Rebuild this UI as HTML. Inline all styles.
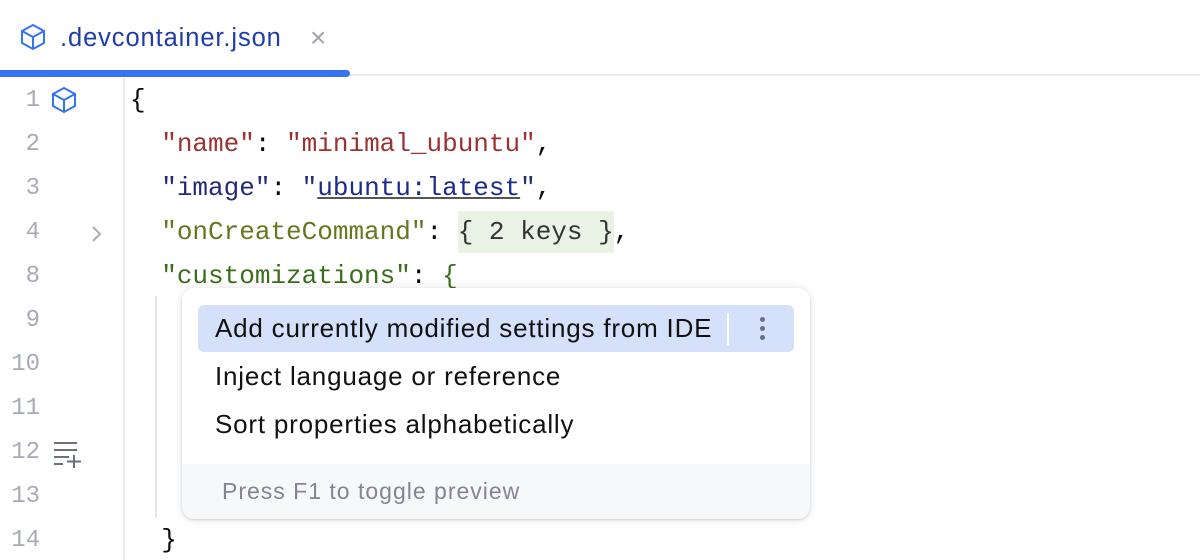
<!DOCTYPE html>
<html><head><meta charset="utf-8"><style>
*{margin:0;padding:0;box-sizing:border-box}
body{width:1200px;height:560px;background:#fff;position:relative;overflow:hidden;font-family:"Liberation Sans",sans-serif}
.tab{position:absolute;left:0;top:0;height:76px;width:1200px;border-bottom:2px solid #ebecf0}
.tabline{position:absolute;left:0;top:70px;width:350px;height:7px;background:#3574f0;border-radius:0 4px 4px 0}
.tabtxt{position:absolute;left:60px;top:24px;font-size:25.5px;letter-spacing:0.9px;color:#1f3da8}
.x{position:absolute;left:310px;top:22px;font-size:28px;color:#a0a3ab}
.gut{position:absolute;left:123px;top:78px;width:2px;height:482px;background:#ebecf0}
.ln{position:absolute;left:0;width:40px;text-align:right;font-family:"Liberation Mono",monospace;font-size:24px;color:#a8abb6}
.code{position:absolute;left:130px;font-family:"Liberation Mono",monospace;font-size:26px;color:#080808;white-space:pre}
.r{color:#9b3232}.n{color:#242b75}.b{color:#1d2c8a;text-decoration:underline;text-decoration-color:#555}.o{color:#6a761f}.g{color:#3b6e1a}
.fold{background:#e8f3e6;color:#333;padding:6px 0}
.pop{position:absolute;left:182px;top:288px;width:628px;height:231px;background:#fff;border-radius:12px;box-shadow:0 0 10px rgba(0,0,0,.1),0 1px 2px rgba(0,0,0,.15);overflow:hidden}
.hl{position:absolute;left:16px;top:17px;width:596px;height:47px;background:#d5e0fa;border-radius:6px}
.it{position:absolute;left:33px;font-size:26px;letter-spacing:0.8px;color:#111}
.foot{position:absolute;left:0;top:176px;width:628px;height:55px;background:#f7f8fa}
.foot span{position:absolute;left:40px;top:14px;font-size:23px;letter-spacing:1px;color:#818594}
</style></head><body>
<div class="tab">
<svg style="position:absolute;left:19px;top:23px" width="28" height="28" viewBox="0 0 28 28" fill="none" stroke="#3574f0" stroke-width="2"><path d="M14 2 L25 8 V20 L14 26 L3 20 V8 Z M3 8 L14 14 L25 8 M14 14 V26"/></svg>
<div class="tabtxt">.devcontainer.json</div>
<div class="x">×</div>
</div>
<div class="tabline"></div>
<div class="gut"></div>
<svg style="position:absolute;left:50px;top:86px" width="28" height="28" viewBox="0 0 28 28" fill="none" stroke="#3574f0" stroke-width="2"><path d="M14 2 L25 8 V20 L14 26 L3 20 V8 Z M3 8 L14 14 L25 8 M14 14 V26"/></svg>
<svg style="position:absolute;left:90px;top:224px" width="14" height="20" viewBox="0 0 14 20" fill="none" stroke="#a8abb6" stroke-width="2"><path d="M3 3 L10 10 L3 17"/></svg>
<svg style="position:absolute;left:53px;top:441px" width="30" height="28" viewBox="0 0 30 28" fill="none" stroke="#6c707e" stroke-width="2"><path d="M1 2H24M1 9H24M1 16H16M1 23H10M21 14V27M14 20.5H28"/></svg>
<div class="ln" style="top:87px">1</div>
<div class="ln" style="top:131px">2</div>
<div class="ln" style="top:175px">3</div>
<div class="ln" style="top:219px">4</div>
<div class="ln" style="top:263px">8</div>
<div class="ln" style="top:307px">9</div>
<div class="ln" style="top:351px">10</div>
<div class="ln" style="top:395px">11</div>
<div class="ln" style="top:439px">12</div>
<div class="ln" style="top:483px">13</div>
<div class="ln" style="top:527px">14</div>
<div class="code" style="top:85px">{</div>
<div class="code" style="top:129px">  <span class="r">"name"</span>: <span class="r">"minimal_ubuntu"</span>,</div>
<div class="code" style="top:173px">  <span class="n">"image"</span>: <span class="n">"</span><span class="b">ubuntu:latest</span><span class="n">"</span>,</div>
<div class="code" style="top:217px">  <span class="o">"onCreateCommand"</span>: <span class="fold">{ 2 keys }</span>,</div>
<div class="code" style="top:261px">  <span class="g">"customizations"</span>: <span class="g">{</span></div>
<div class="code" style="top:525px">  }</div>
<div style="position:absolute;left:155px;top:296px;width:2px;height:222px;background:#e6e7eb"></div>
<div class="pop">
<div class="hl"></div>
<div class="it" style="top:25px">Add currently modified settings from IDE</div>
<div style="position:absolute;left:545px;top:25px;width:2px;height:32px;background:#fff"></div>
<div style="position:absolute;left:578px;top:29px;width:5px;height:24px">
<div style="width:5px;height:5px;border-radius:50%;background:#6c707e;margin-bottom:4px"></div>
<div style="width:5px;height:5px;border-radius:50%;background:#6c707e;margin-bottom:4px"></div>
<div style="width:5px;height:5px;border-radius:50%;background:#6c707e"></div></div>
<div class="it" style="top:73px">Inject language or reference</div>
<div class="it" style="top:121px">Sort properties alphabetically</div>
<div class="foot"><span>Press F1 to toggle preview</span></div>
</div>
</body></html>
